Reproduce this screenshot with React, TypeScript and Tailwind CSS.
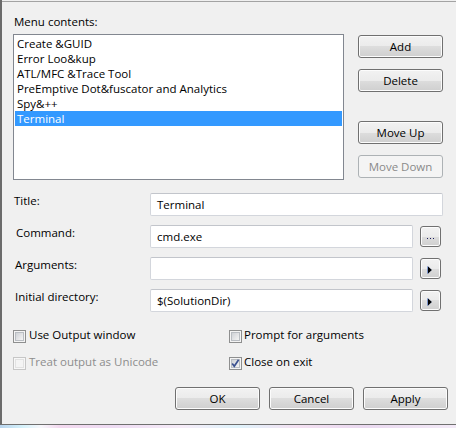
import React from "react";

function Btn({ label, disabled }: { label: string; disabled?: boolean }) {
  return (
    <div
      className={
        disabled
          ? "h-[23px] w-[85px] flex items-center justify-center rounded-[3px] border border-[#adb2b5] bg-[#f4f4f4] text-[#8a8a8a]"
          : "h-[23px] w-[85px] flex items-center justify-center rounded-[3px] border border-[#707070] bg-[linear-gradient(to_bottom,#f2f2f2_0%,#ebebeb_50%,#dddddd_50%,#cfcfcf_100%)] shadow-[inset_0_0_0_1px_#fcfcfc] text-black"
      }
    >
      {label}
    </div>
  );
}

function SmallBtn({ kind }: { kind: "dots" | "arrow" }) {
  return (
    <div className="mt-[1px] ml-[7px] h-[21px] w-[21px] rounded-[3px] border border-[#707070] bg-[linear-gradient(to_bottom,#f2f2f2_0%,#ebebeb_50%,#dddddd_50%,#cfcfcf_100%)] shadow-[inset_0_0_0_1px_#fcfcfc]">
      <svg width="19" height="19" viewBox="0 0 19 19" className="block">
        {kind === "dots" ? (
          <g fill="#1c1c5c">
            <rect x="6" y="11" width="1" height="1" />
            <rect x="9" y="11" width="1" height="1" />
            <rect x="12" y="11" width="1" height="1" />
          </g>
        ) : (
          <g>
            <polygon points="6.5,7 6.5,15 10.5,11" fill="#1f4fb8" />
            <polygon points="7,7.5 7,14.5 10.8,11" fill="#000" />
          </g>
        )}
      </svg>
    </div>
  );
}

function Check({ checked, disabled }: { checked?: boolean; disabled?: boolean }) {
  return (
    <div
      className={
        disabled
          ? "relative mt-[3px] h-[13px] w-[13px] shrink-0 border border-[#c6c6c6] bg-[#f7f7f7] p-[1px]"
          : "relative mt-[3px] h-[13px] w-[13px] shrink-0 border border-[#8e8f8f] bg-[#f4f4f4] p-[1px]"
      }
    >
      <div
        className={
          disabled
            ? "h-full w-full border border-[#e2e2e2] bg-[#f4f4f4]"
            : "h-full w-full border border-[#b9bdc2] bg-[linear-gradient(135deg,#cfd2d6,#f4f4f4)]"
        }
      />
      {checked && (
        <svg width="13" height="13" viewBox="0 0 13 13" className="absolute left-[-1px] top-[-1px]">
          <path d="M3.2 6.4 L5.3 9.3 L9.6 2.8" stroke="#3b5190" strokeWidth="1.7" fill="none" />
        </svg>
      )}
    </div>
  );
}

function Field({ value, w }: { value: string; w: string }) {
  return (
    <div
      className={`${w} h-[23px] flex items-center rounded-[2px] border border-[#d3d6dc] border-t-[#c2c5cb] bg-white pl-[6px]`}
    >
      {value}
    </div>
  );
}

const items = [
  "Create &GUID",
  "Error Loo&kup",
  "ATL/MFC &Trace Tool",
  "PreEmptive Dot&fuscator and Analytics",
  "Spy&++",
  "Terminal",
];

export default function App() {
  return (
    <div className="w-[456px] h-[428px] flex flex-col bg-[#f0f0f0] font-['Open_Sans','Noto_Sans',sans-serif] text-[11.5px] leading-[15px] text-black">
      <div className="h-[425px] flex flex-col border-l-2 border-l-[#6b6b6b] border-b border-b-[#707070] pt-[1px]">
        <div className="flex-1 flex flex-col border-t border-t-[#a3a3a3] pl-[11px]">
          <div className="mt-[12px] pl-[1px]">Menu contents:</div>
          <div className="mt-[5px] flex">
            <div className="h-[146px] w-[331px] border border-[#828790] bg-white pt-[1px] px-[1px]">
              {items.map((t, i) =>
                i === 5 ? (
                  <div key={t} className="h-[15px] bg-[#3399ff] pl-[2px] text-white">
                    {t}
                  </div>
                ) : (
                  <div key={t} className="h-[15px] pl-[2px]">
                    {t}
                  </div>
                )
              )}
            </div>
            <div className="ml-[14px] pt-[1px] flex flex-col">
              <Btn label="Add" />
              <div className="mt-[11px]">
                <Btn label="Delete" />
              </div>
              <div className="mt-[29px]">
                <Btn label="Move Up" />
              </div>
              <div className="mt-[11px]">
                <Btn label="Move Down" disabled />
              </div>
            </div>
          </div>

          <div className="mt-[13px] flex flex-col gap-[9px]">
            <div className="flex h-[23px]">
              <div className="w-[137px] pl-[1px]">Title:</div>
              <Field value="Terminal" w="w-[293px]" />
            </div>
            <div className="flex h-[23px]">
              <div className="w-[137px] pl-[3px]">Command:</div>
              <Field value="cmd.exe" w="w-[263px]" />
              <SmallBtn kind="dots" />
            </div>
            <div className="flex h-[23px]">
              <div className="w-[137px] pl-[2px]">Arguments:</div>
              <Field value="" w="w-[263px]" />
              <SmallBtn kind="arrow" />
            </div>
            <div className="flex h-[23px]">
              <div className="w-[137px] pl-[2px]">Initial directory:</div>
              <Field value="$(SolutionDir)" w="w-[263px]" />
              <SmallBtn kind="arrow" />
            </div>
          </div>

          <div className="mt-[15px] flex h-[15px]">
            <div className="w-[216px] flex">
              <Check />
              <span className="ml-[3px]">Use Output window</span>
            </div>
            <div className="flex">
              <Check />
              <span className="ml-[2px]">Prompt for arguments</span>
            </div>
          </div>
          <div className="mt-[12px] flex h-[15px]">
            <div className="w-[216px] flex">
              <Check disabled />
              <span className="ml-[3px] text-[#8d8d8d]">Treat output as Unicode</span>
            </div>
            <div className="flex">
              <Check checked />
              <span className="ml-[2px]">Close on exit</span>
            </div>
          </div>

          <div className="mt-[18px] flex justify-end gap-[9px] pr-[8px]">
            <Btn label="OK" />
            <Btn label="Cancel" />
            <Btn label="Apply" />
          </div>
        </div>
      </div>
      <div className="h-[3px] bg-[linear-gradient(to_right,#b9d5ee_0%,#d6f2fb_5%,#f7f7fb_9%,#f3d9ef_13%,#eedcf3_25%,#f6ecf8_40%,#dff3fb_52%,#f4e1f2_65%,#ead9f0_80%,#f3eaf7_100%)]" />
    </div>
  );
}
